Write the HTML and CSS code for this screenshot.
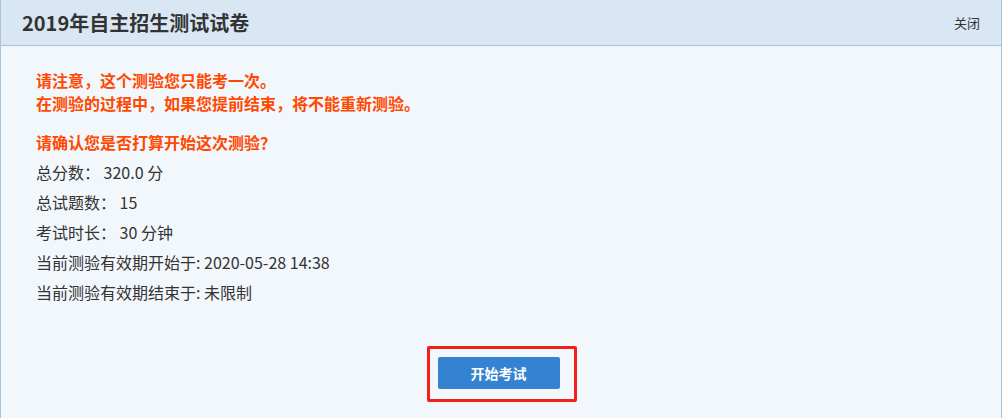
FILE: index.html
```html
<!DOCTYPE html>
<html>
<head>
    <meta charset="utf-8" />
    <link rel="stylesheet" href="styles.css">
</head>
<body>
    <div class="panel">
        <div class="panel-head">
            <h2 class="title">2019年自主招生测试试卷</h2>
            <a class="close">关闭</a>
        </div>
        <div class="panel-body">
            <p class="warn">请注意，这个测验您只能考一次。<br />在测验的过程中，如果您提前结束，将不能重新测验。</p>
            <p class="warn confirm">请确认您是否打算开始这次测验？</p>
            <ul class="info">
                <li>总分数：&nbsp;320.0 分</li>
                <li>总试题数：&nbsp;15</li>
                <li>考试时长：&nbsp;30 分钟</li>
                <li>当前测验有效期开始于: 2020-05-28 14:38</li>
                <li>当前测验有效期结束于: 未限制</li>
            </ul>
            <div class="actions">
                <span class="mark"><button class="btn-start">开始考试</button></span>
            </div>
        </div>
    </div>
</body>
</html>
```

FILE: styles.css
```css
body {
    margin: 0;
    font-family: "Noto Sans CJK SC", sans-serif;
    color: #333;
    background-color: #fff;
}

.panel {
    width: 1000px;
    height: 430px;
    border: 1px solid #a9c3df;
    border-top: 0;
    background-color: #f2f7fc;
}

.panel-head {
    height: 45px;
    border-bottom: 1px solid #a9c3df;
    background-color: #d9e6f4;
    display: flex;
    align-items: center;
    justify-content: space-between;
    padding: 0 21px 0 21px;
}

.title {
    margin: 0;
    font-size: 20px;
    font-weight: bold;
    color: #333;
    line-height: 24px;
}

.close {
    font-size: 13px;
    color: #333;
    cursor: pointer;
}

.panel-body {
    padding: 23px 35px 0 35px;
}

.warn {
    margin: 0;
    color: #ff4800;
    font-weight: bold;
    font-size: 16px;
    line-height: 23px;
}

.confirm {
    margin-top: 16px;
}

.info {
    list-style: none;
    margin: 3px 0 0 0;
    padding: 0;
    font-size: 16px;
    line-height: 30px;
}

.actions {
    display: flex;
    justify-content: center;
    margin-top: 39px;
    padding-left: 1px;
}

.mark {
    display: inline-block;
    border: 3px solid #f2201a;
    border-radius: 2px;
    padding: 8px 14px 10px 8px;
}

.btn-start {
    display: block;
    width: 122px;
    height: 32px;
    border: 0;
    border-radius: 2px;
    background-color: #3582d2;
    color: #fff;
    font-family: "Noto Sans CJK SC", sans-serif;
    font-size: 14px;
    font-weight: bold;
}
```
